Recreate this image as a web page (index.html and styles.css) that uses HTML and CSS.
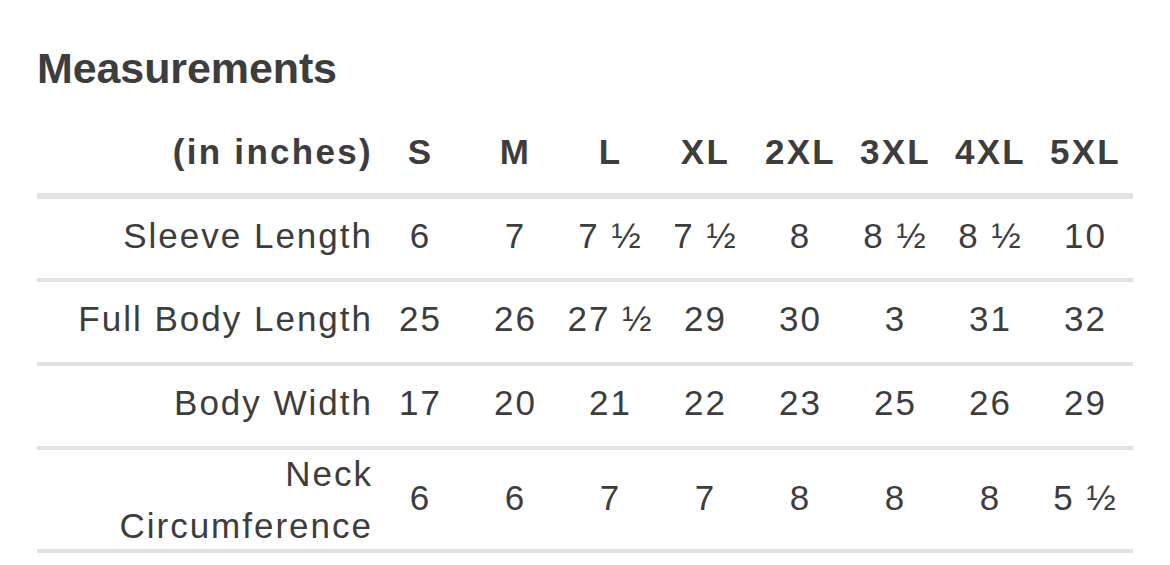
FILE: index.html
```html
<!DOCTYPE html>
<html lang="en">
<head>
<meta charset="utf-8">
<title>Measurements</title>
<link rel="stylesheet" href="styles.css">
</head>
<body>
<main class="page">
  <h2 class="title">Measurements</h2>
  <table class="sizes">
    <thead>
      <tr>
        <th class="label">(in inches)</th>
        <th>S</th><th>M</th><th>L</th><th>XL</th><th>2XL</th><th>3XL</th><th>4XL</th><th>5XL</th>
      </tr>
    </thead>
    <tbody>
      <tr class="first">
        <td class="label">Sleeve Length</td>
        <td>6</td><td>7</td><td>7 ½</td><td>7 ½</td><td>8</td><td>8 ½</td><td>8 ½</td><td>10</td>
      </tr>
      <tr>
        <td class="label">Full Body Length</td>
        <td>25</td><td>26</td><td>27 ½</td><td>29</td><td>30</td><td>3</td><td>31</td><td>32</td>
      </tr>
      <tr>
        <td class="label">Body Width</td>
        <td>17</td><td>20</td><td>21</td><td>22</td><td>23</td><td>25</td><td>26</td><td>29</td>
      </tr>
      <tr class="tall">
        <td class="label"><div class="wrap">Neck<br>Circumference</div></td>
        <td>6</td><td>6</td><td>7</td><td>7</td><td>8</td><td>8</td><td>8</td><td>5 ½</td>
      </tr>
    </tbody>
  </table>
</main>
</body>
</html>
```

FILE: styles.css
```css
html, body {
  margin: 0;
  padding: 0;
  background: #ffffff;
}

.page {
  padding: 43px 0 0 37px;
  font-family: "Liberation Sans", Arial, Helvetica, sans-serif;
  color: #3d3d3d;
}

.title {
  margin: 0;
  font-size: 43px;
  line-height: 50px;
  font-weight: 700;
  letter-spacing: -0.1px;
}

.sizes {
  margin-top: 33px;
  width: 1096px;
  border-collapse: collapse;
  table-layout: fixed;
  font-size: 35px;
  letter-spacing: 2px;
}

.sizes th,
.sizes td {
  padding: 0;
  text-align: center;
  vertical-align: middle;
  line-height: 51px;
  white-space: nowrap;
}

.sizes th {
  font-weight: 700;
  letter-spacing: 2.3px;
  padding-bottom: 16px;
  border-bottom: 6px solid #e1e1e6;
}

.sizes th.label,
.sizes td.label {
  width: 336px;
  text-align: right;
}

.sizes td {
  padding-top: 10.5px;
  padding-bottom: 18.5px;
  border-bottom: 4px solid #e1e1e6;
}

.sizes .first td {
  padding-bottom: 17.5px;
}

.sizes .tall td {
  padding: 0 0 4px;
  height: 95px;
}

.sizes .tall td.label {
  padding: 0;
  height: 99px;
}

.wrap {
  line-height: 51.5px;
  margin: -2px 0;
}
```
